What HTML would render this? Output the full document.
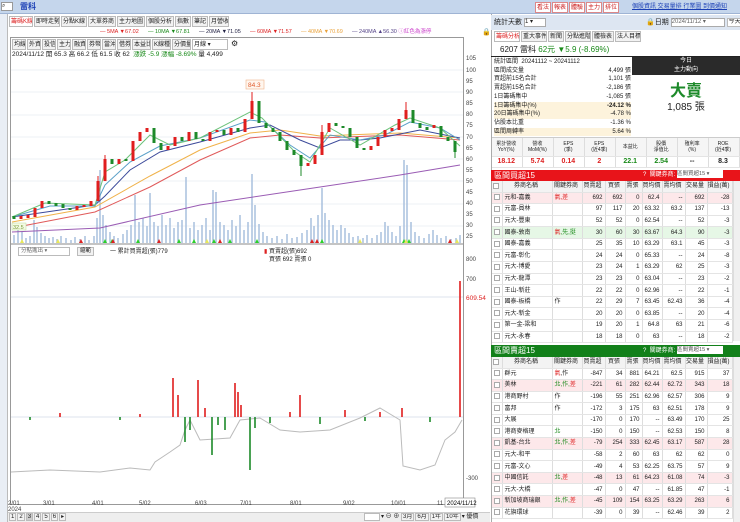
<!DOCTYPE html>
<html><head><meta charset="utf-8"><style>
*{box-sizing:border-box;margin:0;padding:0}
body{width:740px;height:522px;overflow:hidden;background:#fff;position:relative;font-family:"Liberation Sans","Noto Sans CJK TC",sans-serif;font-size:7px;color:#222}
.a{position:absolute}
.tab{display:inline-block;border:1px solid #bbb;background:#f2f2f2;padding:0 1px;height:11px;line-height:10px;font-size:6px;margin-right:1px;vertical-align:top;overflow:hidden}
table{border-collapse:collapse;width:100%;table-layout:fixed}
td{border-right:1px solid #ddd;border-bottom:1px solid #e4e4e4;height:11.6px;line-height:10px;font-size:6px;text-align:right;padding:0 2px 0 0;white-space:nowrap;overflow:hidden}
td.l{text-align:left;padding-left:2px}
tr.h td{background:#f3f3f3;text-align:center;height:11px}
tr.p td{background:#fde8ea}
tr.g td{background:#e6f7e6}
.cb{display:inline-block;width:6px;height:6px;border:1px solid #aaa;background:#fff;vertical-align:middle}
.r{color:#d22}.gr{color:#1a8a1a}
</style></head><body>
<div class="a" style="left:0;top:0;width:740px;height:14px;background:#c5d6ec;border-bottom:1px solid #9fb4d4"></div>
<div class="a" style="left:1px;top:2px;width:12px;height:9px;background:#fff;border:1px solid #999;font-size:6px;line-height:7px">⌕</div>
<div class="a" style="left:20px;top:2px;color:#1a3fb5;font-size:8px;line-height:10px;font-weight:bold">雷科</div>
<div class="a" style="left:535px;top:2px;white-space:nowrap">
<span class="tab" style="background:#fff;color:#c22;border-color:#d88;width:16px">看法</span><span class="tab" style="background:#fff;color:#c22;border-color:#d88;width:16px">報表</span><span class="tab" style="background:#fff;color:#c22;border-color:#d88;width:16px">體驗</span><span class="tab" style="background:#fff;color:#c22;border-color:#d88;width:16px">主力</span><span class="tab" style="background:#fff;color:#c22;border-color:#d88;width:16px">排位</span></div>
<div class="a" style="left:632px;top:3px;color:#1a3fb5;text-decoration:underline;font-size:6px;line-height:8px;white-space:nowrap">個股資訊 交易量排 行業圖 到價通知</div>
<div class="a" style="left:0;top:14px;width:8px;height:508px;background:#e9eef5;border-right:1px solid #bbb"></div>
<div class="a" style="left:9px;top:16px;white-space:nowrap">
<span class="tab" style="color:#d22;background:#fff;width:24px">籌碼K線</span><span class="tab" style="width:26px">即時走勢</span><span class="tab" style="width:26px">分點K線</span><span class="tab" style="width:28px">大單券商</span><span class="tab" style="width:28px">主力地圖</span><span class="tab" style="width:28px">個股分析</span><span class="tab" style="width:16px">指數</span><span class="tab" style="width:16px">筆記</span><span class="tab" style="width:20px">月營收</span></div>
<div class="a" style="left:100px;top:29px;font-size:5.5px;line-height:7px;white-space:nowrap"><span class="r">— 5MA ▼67.02</span>&nbsp;&nbsp;&nbsp;&nbsp;&nbsp;&nbsp;<span class="gr">— 10MA ▼67.81</span>&nbsp;&nbsp;&nbsp;&nbsp;&nbsp;&nbsp;<span style="color:#224">— 20MA ▼71.05</span>&nbsp;&nbsp;&nbsp;&nbsp;&nbsp;&nbsp;<span class="r">— 60MA ▼71.57</span>&nbsp;&nbsp;&nbsp;&nbsp;&nbsp;&nbsp;<span style="color:#e9a23b">— 40MA ▼70.69</span>&nbsp;&nbsp;&nbsp;&nbsp;&nbsp;&nbsp;<span style="color:#548">— 240MA ▲56.30</span> <span style="color:#c4c">ⓘ紅色為漲停</span></div>
<div class="a" style="left:482px;top:28px;font-size:7px">🔒</div>
<div class="a" style="left:10px;top:37px;width:454px;height:468px;border:1px solid #999"></div>
<div class="a" style="left:12px;top:39px;white-space:nowrap"><span class="tab" style="width:14px">均線</span><span class="tab" style="width:14px">外資</span><span class="tab" style="width:14px">投信</span><span class="tab" style="width:14px">主力</span><span class="tab" style="width:14px">融資</span><span class="tab" style="width:14px">券幣</span><span class="tab" style="width:14px">當沖</span><span class="tab" style="width:14px">借券</span><span class="tab" style="width:19px">本益比</span><span class="tab" style="width:19px">K線種</span><span class="tab" style="width:19px">分價量</span><span class="tab" style="width:36px;background:#fff">月線 ▾</span> <span style="font-size:8px;line-height:10px">⚙</span></div>
<div class="a" style="left:12px;top:51px;font-size:6.5px;line-height:8px;white-space:nowrap">2024/11/12 開 65.3 高 66.2 低 61.5 收 62 &nbsp;<span class="gr">漲跌 -5.9 漲幅 -8.69%</span> 量 4,499</div>
<svg class="a" style="left:0;top:0" width="740" height="522">
<g stroke="#eef0f4" stroke-width="1">
<path d="M11 70H463M11 92H463M11 115H463M11 137H463M11 159H463M11 181H463M11 204H463M11 226H463"/>
<path d="M11 417H463M11 297H463" stroke="#dde3ee"/>
</g>
<line x1="11" y1="244" x2="463" y2="244" stroke="#888"/>
<path stroke="#a8c0de" stroke-width="1.5" d="M14 243V235M18 243V230M22 243V232M26 243V238M30 243V236M34 243V220M37 243V227M41 243V233M45 243V236M49 243V238M53 243V237M57 243V239M61 243V236M66 243V238M71 243V240M75 243V237M80 243V239M85 243V236M89 243V240M94 243V236M97 243V218M100 243V170M103 243V215M106 243V225M110 243V232M114 243V236M118 243V238M123 243V234M127 243V230M131 243V225M135 243V195M139 243V222M143 243V218M147 243V226M150 243V193M154 243V222M158 243V226M162 243V215M166 243V225M170 243V218M174 243V228M178 243V222M182 243V220M186 243V177M190 243V228M194 243V222M198 243V230M202 243V225M206 243V218M210 243V230M213 243V190M216 243V192M220 243V222M224 243V225M228 243V230M232 243V220M236 243V226M240 243V215M244 243V230M248 243V222M252 243V174M255 243V205M259 243V224M263 243V232M267 243V236M272 243V238M277 243V236M282 243V239M287 243V234M292 243V238M297 243V237M302 243V233M307 243V230M311 243V218M314 243V226M318 243V215M322 243V188M325 243V213M329 243V220M333 243V225M337 243V230M341 243V225M345 243V228M349 243V233M353 243V237M358 243V236M363 243V238M367 243V235M372 243V238M377 243V235M381 243V232M385 243V222M388 243V226M392 243V232M396 243V236M400 243V226M404 243V160M407 243V165M411 243V222M415 243V232M419 243V236M424 243V238M429 243V234M433 243V230M437 243V235M441 243V238M446 243V236M451 243V239M456 243V238M460 243V235"/>
<g fill="none" stroke-width="1">
<polyline stroke="#9a5cb4" points="12,232 100,228 200,205 300,190 400,175 460,165"/>
<polyline stroke="#e05a5a" points="12,228 95,212 150,187 200,160 250,138 280,135 320,138 400,135 460,140"/>
<polyline stroke="#f0b24a" points="12,222 95,207 150,176 200,150 250,133 280,130 320,136 400,133 460,138"/>
<polyline stroke="#3c4a9a" points="12,217 60,210 95,205 105,196 130,170 160,152 200,142 250,128 270,125 300,140 320,148 340,140 360,140 380,138 420,130 460,138"/>
<polyline stroke="#5aa0c8" points="12,217 50,206 95,206 105,185 130,162 160,146 200,138 250,120 265,122 290,145 310,158 330,135 360,140 385,135 410,122 440,128 460,140"/>
<polyline stroke="#6cc27a" points="12,217 45,203 95,205 105,172 125,160 150,135 170,145 200,138 250,112 262,118 295,152 310,162 330,128 360,145 395,125 410,118 440,128 460,146"/>
</g>
<path stroke="#e01e1e" stroke-width="3" d="M21 219V216M28 218V215M35 217V208M42 208V201M77 210V206M84 207V205M91 206V201M98 201V181M105 181V159M119 164V159M133 161V141M140 141V132M147 132V128M168 150V146M175 146V137M189 141V132M210 141V132M217 132V130M231 135V128M245 132V119M252 119V101M308 166V163M315 164V155M322 155V132M329 132V123M371 150V146M378 146V137M385 137V130M392 131V128M399 130V119M406 119V110M434 128V125"/>
<path stroke="#e01e1e" stroke-width="1" d="M252 101V92M98 185V176M105 162V155M322 135V125M406 112V102"/>
<path stroke="#1d8a2a" stroke-width="3" d="M14 216V219M49 201V204M56 203V206M63 204V208M70 208V210M112 159V164M126 159V161M154 128V143M161 143V150M182 137V141M196 132V139M203 139V141M224 130V135M238 128V132M259 101V123M266 123V128M273 128V132M280 132V141M287 141V150M294 150V155M301 155V166M336 123V126M343 126V128M350 128V137M357 137V148M364 148V150M413 110V123M420 123V128M427 127V130M441 126V137M448 137V141M455 141V152"/>
<path stroke="#1d8a2a" stroke-width="1" d="M301 160V176M455 150V158"/>
<rect x="246" y="80" width="18" height="9" fill="#fff6ee" stroke="#f0b48a" stroke-width=".6"/>
<text x="248" y="87" font-size="6.5" fill="#e05a2a" font-family="Liberation Sans">84.3</text>
<rect x="12" y="223" width="14" height="7" fill="#f4fbe4" stroke="#bcd99a" stroke-width=".5"/>
<text x="13" y="229" font-size="5.5" fill="#7a9a3a" font-family="Liberation Sans">32.5</text>
<g fill="#2bd02b"><path d="M103 243l2-4 2 4zM110 243l2-4 2 4zM136 243l2-4 2 4zM177 243l2-4 2 4zM192 243l2-4 2 4zM212 243l2-4 2 4zM228 243l2-4 2 4zM255 243l2-4 2 4zM320 243l2-4 2 4zM402 243l2-4 2 4zM407 243l2-4 2 4z"/></g>
<g fill="#d22"><path d="M79 243l2-4 2 4zM111 243l2-4 2 4zM157 243l2-4 2 4zM218 243l2-4 2 4zM310 243l2-4 2 4zM315 243l2-4 2 4zM448 243l2-4 2 4z"/></g>
<g fill="#e8e85a"><path d="M20 243l2-4 2 4zM56 243l2-4 2 4zM205 243l2-4 2 4zM358 243l2-4 2 4zM404 243l2-4 2 4zM455 243l2-4 2 4z"/></g>
<polyline fill="none" stroke="#bbb" stroke-width="1" points="11,472 50,470 100,472 130,468 150,470 155,462 170,452 180,445 185,430 190,420 200,440 230,438 240,420 260,418 280,430 300,432 330,430 360,418 380,408 400,420 403,466 420,470 435,465 445,440 455,432 462,420"/>
<g stroke="#e01e1e" stroke-width="1.6">
<path d="M173 417V378M178 417V395M198 417V380M205 417V408M235 417V383M238 417V392M241 417V405M290 417V412M300 417V395M345 417V410M380 417V412M402 417V408M60 417V413M140 417V414M460 417V281"/>
</g>
<g stroke="#1d8a2a" stroke-width="1.6">
<path d="M185 417V442M190 417V430M212 417V455M218 417V425M225 417V430M250 417V470M255 417V428M270 417V423M320 417V424M365 417V421M30 417V420M120 417V420M430 417V422"/>
</g>
<g font-size="6" fill="#444" font-family="Liberation Sans">
<text x="466" y="60">105</text><text x="466" y="72">100</text><text x="466" y="83">95</text><text x="466" y="94">90</text><text x="466" y="105">85</text><text x="466" y="116">80</text><text x="466" y="127">75</text><text x="466" y="139">70</text><text x="466" y="150">65</text><text x="466" y="161">60</text><text x="466" y="172">55</text><text x="466" y="183">50</text><text x="466" y="194">45</text><text x="466" y="205">40</text><text x="466" y="216">35</text><text x="466" y="227">30</text><text x="466" y="238">25</text>
<text x="466" y="261">800</text><text x="466" y="281">700</text><text x="466" y="300" fill="#d22" font-size="6.5">609.54</text><text x="466" y="480">-300</text>
<text x="8" y="505">2/01</text><text x="8" y="511">2024</text><text x="43" y="505">3/01</text><text x="92" y="505">4/01</text><text x="139" y="505">5/02</text><text x="195" y="505">6/03</text><text x="240" y="505">7/01</text><text x="290" y="505">8/01</text><text x="343" y="505">9/02</text><text x="391" y="505">10/01</text><text x="437" y="505">11</text>
</g>
<rect x="445" y="498" width="30" height="9" fill="#fff" stroke="#888" stroke-width=".6"/>
<text x="447" y="505" font-size="6" font-family="Liberation Sans">2024/11/12</text>
</svg>
<div class="a" style="left:18px;top:247px;width:52px;height:9px;border:1px solid #bbb;font-size:5.5px;line-height:7px;color:#666;padding-left:2px">分點進出 ▾</div>
<div class="a" style="left:77px;top:247px;width:17px;height:9px;border:1px solid #bbb;background:#f2f2f2;font-size:5.5px;line-height:7px;text-align:center">縮範</div>
<div class="a" style="left:110px;top:248px;font-size:6px;line-height:8px">一 累計買賣超(張)779</div>
<div class="a" style="left:264px;top:248px;font-size:6px;line-height:8px"><span style="color:#d22">▮</span> 買賣超(張)692<br>&nbsp;&nbsp;&nbsp;買張 692 賣張 0</div>
<div class="a" style="left:8px;top:512px;width:482px;height:10px;background:#eee;border-top:1px solid #ccc"></div>
<div class="a" style="left:9px;top:513px;white-space:nowrap"><span class="tab" style="height:8px;line-height:7px">1</span><span class="tab" style="height:8px;line-height:7px">2</span><span class="tab" style="height:8px;line-height:7px;background:#ccc">3</span><span class="tab" style="height:8px;line-height:7px">4</span><span class="tab" style="height:8px;line-height:7px">5</span><span class="tab" style="height:8px;line-height:7px">6</span><span class="tab" style="height:8px;line-height:7px">▸</span></div>
<div class="a" style="left:364px;top:513px;font-size:6px;line-height:8px;white-space:nowrap"><span class="tab" style="width:16px;height:8px;background:#fff"></span>▾ ⊖ ⊕ <span class="tab" style="height:8px;line-height:7px">3月</span><span class="tab" style="height:8px;line-height:7px">6月</span><span class="tab" style="height:8px;line-height:7px">1年</span><span class="tab" style="height:8px;line-height:7px">10年</span>▾ 優價</div>
<div class="a" style="left:491px;top:14px;width:249px;height:508px;border-left:1px solid #aaa"></div>
<div class="a" style="left:491px;top:15px;width:249px;height:15px;background:#dde6f2"></div>
<div class="a" style="left:494px;top:18px;font-size:7px;line-height:9px;white-space:nowrap">統計天數 <span style="display:inline-block;width:22px;height:9px;border:1px solid #aaa;background:#fff;font-size:6px;line-height:7px;vertical-align:top">1 ▾</span></div>
<div class="a" style="left:646px;top:18px;font-size:7px;line-height:9px;white-space:nowrap">🔒日期 <span style="display:inline-block;width:54px;height:9px;border:1px solid #aaa;background:#fff;font-size:6px;line-height:7px;vertical-align:top;color:#666">2024/11/12 ▾</span> <span class="tab" style="background:#fff;height:9px;line-height:7px">今天</span></div>
<div class="a" style="left:494px;top:31px;white-space:nowrap"><span class="tab" style="color:#d22;background:#fff;width:26px">籌碼分析</span><span class="tab" style="width:26px">重大事件</span><span class="tab" style="width:16px">新聞</span><span class="tab" style="width:26px">分點進階</span><span class="tab" style="width:22px">體檢表</span><span class="tab" style="width:26px">法人目標</span></div>
<div class="a" style="left:491px;top:43px;width:249px;height:14px;border-bottom:1px solid #222"></div>
<div class="a" style="left:500px;top:45px;font-size:8px;line-height:10px;white-space:nowrap">6207 雷科 <span class="gr">62元 ▼5.9 (-8.69%)</span></div>
<div class="a" style="left:494px;top:58px;width:137px;font-size:6px;line-height:8.7px">
<div>統計區間 &nbsp;20241112 ~ 20241112</div>
<div>區間成交量<span style="float:right">4,499 張</span></div>
<div>買超前15名合計<span style="float:right">1,101 張</span></div>
<div>賣超前15名合計<span style="float:right">-2,186 張</span></div>
<div>1日籌碼集中<span style="float:right">-1,085 張</span></div>
<div style="background:#fdf3dc">1日籌碼集中(%)<span style="float:right;font-weight:bold">-24.12 %</span></div>
<div style="background:#fdf3dc">20日籌碼集中(%)<span style="float:right">-4.78 %</span></div>
<div>佔股本比重<span style="float:right">-1.36 %</span></div>
<div style="background:#fdf3dc">區間周轉率<span style="float:right">5.64 %</span></div>
</div>
<div class="a" style="left:632px;top:57px;width:108px;height:18px;background:#2a2a2a;color:#fff;font-size:6px;text-align:center;line-height:8.5px">今日<br>主力動向</div>
<div class="a" style="left:632px;top:83px;width:108px;text-align:center;color:#1d8a2a;font-size:16px;line-height:18px;font-weight:bold">大賣</div>
<div class="a" style="left:632px;top:102px;width:108px;text-align:center;font-size:10px;line-height:12px">1,085 張</div>
<div class="a" style="left:492px;top:137px;width:248px;height:31px;border-top:1px solid #ccc">
<table><tr><td style="text-align:center;height:18px;line-height:6px;font-size:5px;background:#f5f5f5">累計營收<br>YoY(%)</td><td style="text-align:center;line-height:6px;font-size:5px;background:#f5f5f5">營收<br>MoM(%)</td><td style="text-align:center;line-height:6px;font-size:5px;background:#f5f5f5">EPS<br>(季)</td><td style="text-align:center;line-height:6px;font-size:5px;background:#f5f5f5">EPS<br>(近4季)</td><td style="text-align:center;line-height:6px;font-size:5px;background:#f5f5f5">本益比</td><td style="text-align:center;line-height:6px;font-size:5px;background:#f5f5f5">股價<br>淨值比</td><td style="text-align:center;line-height:6px;font-size:5px;background:#f5f5f5">殖利率<br>(%)</td><td style="text-align:center;line-height:6px;font-size:5px;background:#f5f5f5">ROE<br>(近4季)</td></tr>
<tr style="font-weight:bold"><td class="r" style="text-align:center;font-size:7px">18.12</td><td class="r" style="text-align:center;font-size:7px">5.74</td><td class="r" style="text-align:center;font-size:7px">0.14</td><td class="r" style="text-align:center;font-size:7px">2</td><td class="gr" style="text-align:center;font-size:7px">22.1</td><td class="gr" style="text-align:center;font-size:7px">2.54</td><td style="text-align:center;font-size:7px">--</td><td style="text-align:center;font-size:7px">8.3</td></tr></table></div>
<div class="a" style="left:491px;top:170px;width:249px;height:11px;background:#e8141a;color:#fff;font-size:8px;padding-left:3px;line-height:11px">區間買超15<span style="position:absolute;left:152px;font-size:6px">?&nbsp; 關鍵券商: <span style="display:inline-block;width:46px;height:8px;background:#fff;color:#555;font-size:5.5px;line-height:8px;vertical-align:middle">區間買超15 ▾</span></span></div>
<div class="a" style="left:492px;top:181px;width:240px">
<table>
<colgroup><col style="width:10px"><col style="width:50px"><col style="width:30px"><col style="width:23px"><col style="width:20px"><col style="width:17px"><col style="width:20px"><col style="width:23px"><col style="width:22px"><col style="width:25px"></colgroup>
<tr class="h"><td><span class="cb"></span></td><td>券商名稱</td><td>關鍵券商</td><td>買賣超</td><td>買張</td><td>賣張</td><td>買均價</td><td>賣均價</td><td>交易量</td><td>損益(萬)</td></tr>
<tr class="p"><td><span class="cb"></span></td><td class="l">元和-嘉義</td><td class="l r">氣,差</td><td>692</td><td>692</td><td>0</td><td>62.4</td><td>--</td><td>692</td><td>-28</td></tr>
<tr><td><span class="cb"></span></td><td class="l">元富-員林</td><td></td><td>97</td><td>117</td><td>20</td><td>63.32</td><td>63.2</td><td>137</td><td>-13</td></tr>
<tr><td><span class="cb"></span></td><td class="l">元大-豐東</td><td></td><td>52</td><td>52</td><td>0</td><td>62.54</td><td>--</td><td>52</td><td>-3</td></tr>
<tr class="g"><td><span class="cb"></span></td><td class="l">國泰-敦南</td><td class="l"><span class="r">氣</span><span class="gr">,先,挺</span></td><td>30</td><td>60</td><td>30</td><td>63.67</td><td>64.3</td><td>90</td><td>-3</td></tr>
<tr><td><span class="cb"></span></td><td class="l">國泰-嘉義</td><td></td><td>25</td><td>35</td><td>10</td><td>63.29</td><td>63.1</td><td>45</td><td>-3</td></tr>
<tr><td><span class="cb"></span></td><td class="l">元富-彰化</td><td></td><td>24</td><td>24</td><td>0</td><td>65.33</td><td>--</td><td>24</td><td>-8</td></tr>
<tr><td><span class="cb"></span></td><td class="l">元大-博愛</td><td></td><td>23</td><td>24</td><td>1</td><td>63.29</td><td>62</td><td>25</td><td>-3</td></tr>
<tr><td><span class="cb"></span></td><td class="l">元大-龍潭</td><td></td><td>23</td><td>23</td><td>0</td><td>63.04</td><td>--</td><td>23</td><td>-2</td></tr>
<tr><td><span class="cb"></span></td><td class="l">王山-新莊</td><td></td><td>22</td><td>22</td><td>0</td><td>62.96</td><td>--</td><td>22</td><td>-1</td></tr>
<tr><td><span class="cb"></span></td><td class="l">國泰-板橋</td><td class="l">作</td><td>22</td><td>29</td><td>7</td><td>63.45</td><td>62.43</td><td>36</td><td>-4</td></tr>
<tr><td><span class="cb"></span></td><td class="l">元大-新金</td><td></td><td>20</td><td>20</td><td>0</td><td>63.85</td><td>--</td><td>20</td><td>-4</td></tr>
<tr><td><span class="cb"></span></td><td class="l">第一金-梁和</td><td></td><td>19</td><td>20</td><td>1</td><td>64.8</td><td>63</td><td>21</td><td>-6</td></tr>
<tr><td><span class="cb"></span></td><td class="l">元大-永春</td><td></td><td>18</td><td>18</td><td>0</td><td>63</td><td>--</td><td>18</td><td>-2</td></tr>
</table></div>
<div class="a" style="left:491px;top:345px;width:249px;height:12px;background:#12801a;color:#fff;font-size:8px;padding-left:3px;line-height:12px">區間賣超15<span style="position:absolute;left:152px;font-size:6px">?&nbsp; 關鍵券商: <span style="display:inline-block;width:46px;height:8px;background:#fff;color:#555;font-size:5.5px;line-height:8px;vertical-align:middle">區間賣超15 ▾</span></span></div>
<div class="a" style="left:492px;top:357px;width:240px">
<table>
<colgroup><col style="width:10px"><col style="width:50px"><col style="width:30px"><col style="width:23px"><col style="width:20px"><col style="width:17px"><col style="width:20px"><col style="width:23px"><col style="width:22px"><col style="width:25px"></colgroup>
<tr class="h"><td><span class="cb"></span></td><td>券商名稱</td><td>關鍵券商</td><td>買賣超</td><td>買張</td><td>賣張</td><td>買均價</td><td>賣均價</td><td>交易量</td><td>損益(萬)</td></tr>
<tr><td><span class="cb"></span></td><td class="l">群元</td><td class="l"><span class="r">氣</span>,作</td><td>-847</td><td>34</td><td>881</td><td>64.21</td><td>62.5</td><td>915</td><td>37</td></tr>
<tr class="p"><td><span class="cb"></span></td><td class="l">美林</td><td class="l"><span class="gr">北,作,</span><span class="r">差</span></td><td>-221</td><td>61</td><td>282</td><td>62.44</td><td>62.72</td><td>343</td><td>18</td></tr>
<tr><td><span class="cb"></span></td><td class="l">港商野村</td><td class="l">作</td><td>-196</td><td>55</td><td>251</td><td>62.96</td><td>62.57</td><td>306</td><td>9</td></tr>
<tr><td><span class="cb"></span></td><td class="l">富邦</td><td class="l">作</td><td>-172</td><td>3</td><td>175</td><td>63</td><td>62.51</td><td>178</td><td>9</td></tr>
<tr><td><span class="cb"></span></td><td class="l">大展</td><td></td><td>-170</td><td>0</td><td>170</td><td>--</td><td>63.49</td><td>170</td><td>25</td></tr>
<tr><td><span class="cb"></span></td><td class="l">港商麥格理</td><td class="l gr">北</td><td>-150</td><td>0</td><td>150</td><td>--</td><td>62.53</td><td>150</td><td>8</td></tr>
<tr class="p"><td><span class="cb"></span></td><td class="l">凱基-台北</td><td class="l"><span class="gr">北,作,</span><span class="r">差</span></td><td>-79</td><td>254</td><td>333</td><td>62.45</td><td>63.17</td><td>587</td><td>28</td></tr>
<tr><td><span class="cb"></span></td><td class="l">元大-和平</td><td></td><td>-58</td><td>2</td><td>60</td><td>63</td><td>62</td><td>62</td><td>0</td></tr>
<tr><td><span class="cb"></span></td><td class="l">元富-文心</td><td></td><td>-49</td><td>4</td><td>53</td><td>62.25</td><td>63.75</td><td>57</td><td>9</td></tr>
<tr class="p"><td><span class="cb"></span></td><td class="l">中國信託</td><td class="l"><span class="gr">北,</span><span class="r">差</span></td><td>-48</td><td>13</td><td>61</td><td>64.23</td><td>61.08</td><td>74</td><td>-3</td></tr>
<tr><td><span class="cb"></span></td><td class="l">元大-大橋</td><td></td><td>-47</td><td>0</td><td>47</td><td>--</td><td>61.85</td><td>47</td><td>-1</td></tr>
<tr class="p"><td><span class="cb"></span></td><td class="l">新加坡商瑞銀</td><td class="l"><span class="gr">北,作,</span><span class="r">差</span></td><td>-45</td><td>109</td><td>154</td><td>63.25</td><td>63.29</td><td>263</td><td>6</td></tr>
<tr><td><span class="cb"></span></td><td class="l">花旗環球</td><td></td><td>-39</td><td>0</td><td>39</td><td>--</td><td>62.46</td><td>39</td><td>2</td></tr>
</table></div>
<div class="a" style="left:733px;top:181px;width:7px;height:160px;background:#f0f0f0;border-left:1px solid #ddd"></div>
<div class="a" style="left:733px;top:357px;width:7px;height:165px;background:#f0f0f0;border-left:1px solid #ddd"></div>
</body></html>
